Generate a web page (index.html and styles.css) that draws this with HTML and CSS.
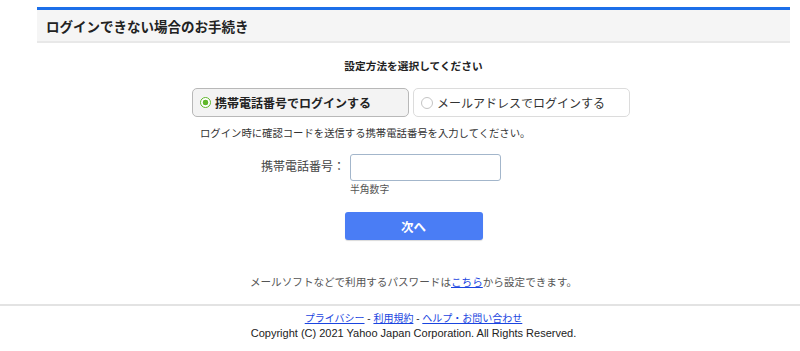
FILE: index.html
```html
<!DOCTYPE html>
<html lang="ja">

<head>
    <meta charset="UTF-8">
    <title>ログインできない場合のお手続き</title>
    <link rel="stylesheet" href="styles.css">
</head>

<body>
    <div class="page">
        <div class="page-head">
            <h1>ログインできない場合のお手続き</h1>
        </div>

        <div class="content">
            <p class="lead">設定方法を選択してください</p>

            <div class="tabs">
                <div class="tab tab-active"><span class="radio radio-on"></span>携帯電話番号でログインする</div>
                <div class="tab"><span class="radio"></span>メールアドレスでログインする</div>
            </div>

            <div class="form-area">
                <p class="desc">ログイン時に確認コードを送信する携帯電話番号を入力してください。</p>
                <div class="field">
                    <label class="field-label" for="tel">携帯電話番号：</label>
                    <div class="field-input">
                        <input type="text" id="tel">
                        <div class="note">半角数字</div>
                    </div>
                </div>
            </div>

            <button class="btn-next">次へ</button>

            <p class="sub">メールソフトなどで利用するパスワードは<a href="#">こちら</a>から設定できます。</p>
        </div>
    </div>

    <div class="footer">
        <div class="footer-inner">
            <div class="footer-links">
                <a href="#">プライバシー</a> - <a href="#">利用規約</a> - <a href="#">ヘルプ・お問い合わせ</a>
            </div>
            <div class="copyright">Copyright (C) 2021 Yahoo Japan Corporation. All Rights Reserved.</div>
        </div>
    </div>
</body>

</html>
```

FILE: styles.css
```css
body {
    margin: 0;
    font-family: "Liberation Sans", "Noto Sans CJK JP", sans-serif;
    color: #333;
    background: #fff;
}

.page {
    margin: 7px 10px 0 37px;
}

.page-head {
    border-top: 3px solid #1c6fe9;
    background: #f5f5f5;
    border-bottom: 2px solid #e8e8e8;
    height: 31px;
    display: flex;
    align-items: center;
}

.page-head h1 {
    margin: 0 0 0 9px;
    font-size: 13.5px;
    font-weight: bold;
    color: #222;
}

.content {
    display: flex;
    flex-direction: column;
    align-items: center;
}

.lead {
    margin: 15px 0 0;
    font-size: 10.7px;
    font-weight: bold;
    color: #222;
    line-height: 16px;
}

.tabs {
    display: flex;
    gap: 4px;
    margin: 14px 5px 0 0;
}

.tab {
    width: 217px;
    height: 29px;
    box-sizing: border-box;
    border: 1px solid #dcdcdc;
    border-radius: 5px;
    background: #fff;
    display: flex;
    align-items: center;
    padding-left: 7px;
    font-size: 12px;
    color: #333;
}

.tab-active {
    background: #f3f3f3;
    border-color: #b8b8b8;
    font-weight: bold;
    color: #222;
}

.radio {
    width: 10px;
    height: 10px;
    border: 1px solid #c4c4c4;
    border-radius: 50%;
    margin-right: 4px;
    flex: none;
    background: #fff;
}

.radio-on {
    border: 1.5px solid #5fb82a;
    width: 9px;
    height: 9px;
    background: radial-gradient(circle, #5fb82a 0 2.6px, #fff 3.1px);
}

.form-area {
    width: 438px;
    margin-right: 5px;
}

.desc {
    margin: 9px 0 0 8px;
    font-size: 10.35px;
    line-height: 16px;
    color: #333;
}

.field {
    display: grid;
    grid-template-columns: 158px 151px;
    margin-top: 12px;
}

.field-label {
    text-align: right;
    padding-right: 5px;
    font-size: 12px;
    color: #444;
    line-height: 27px;
}

.field-input input {
    display: block;
    width: 151px;
    height: 27px;
    box-sizing: border-box;
    border: 1px solid #a3b6cb;
    border-radius: 3px;
    margin: 0;
}

.note {
    font-size: 9.8px;
    color: #555;
    margin-top: 2px;
    line-height: 14px;
}

.btn-next {
    margin-top: 15px;
    width: 138px;
    height: 28px;
    border: none;
    border-radius: 3px;
    background: #4a7df5;
    color: #fff;
    font-family: "Liberation Sans", "Noto Sans CJK JP", sans-serif;
    font-size: 12.5px;
    font-weight: bold;
    box-shadow: 0 1px 1px rgba(0, 0, 0, 0.15);
}

.sub {
    margin: 34px 0 0;
    font-size: 10.6px;
    line-height: 16px;
    color: #555;
}

.sub a {
    color: #1a45e0;
}

.footer {
    margin-top: 14px;
    border-top: 2px solid #e3e3e3;
}

.footer-inner {
    padding: 6px 10px 0 37px;
    text-align: center;
    line-height: 14px;
}

.footer-links {
    font-size: 10px;
}

.footer-links a {
    color: #1a45e0;
}

.copyright {
    font-size: 11px;
    color: #222;
}
```
